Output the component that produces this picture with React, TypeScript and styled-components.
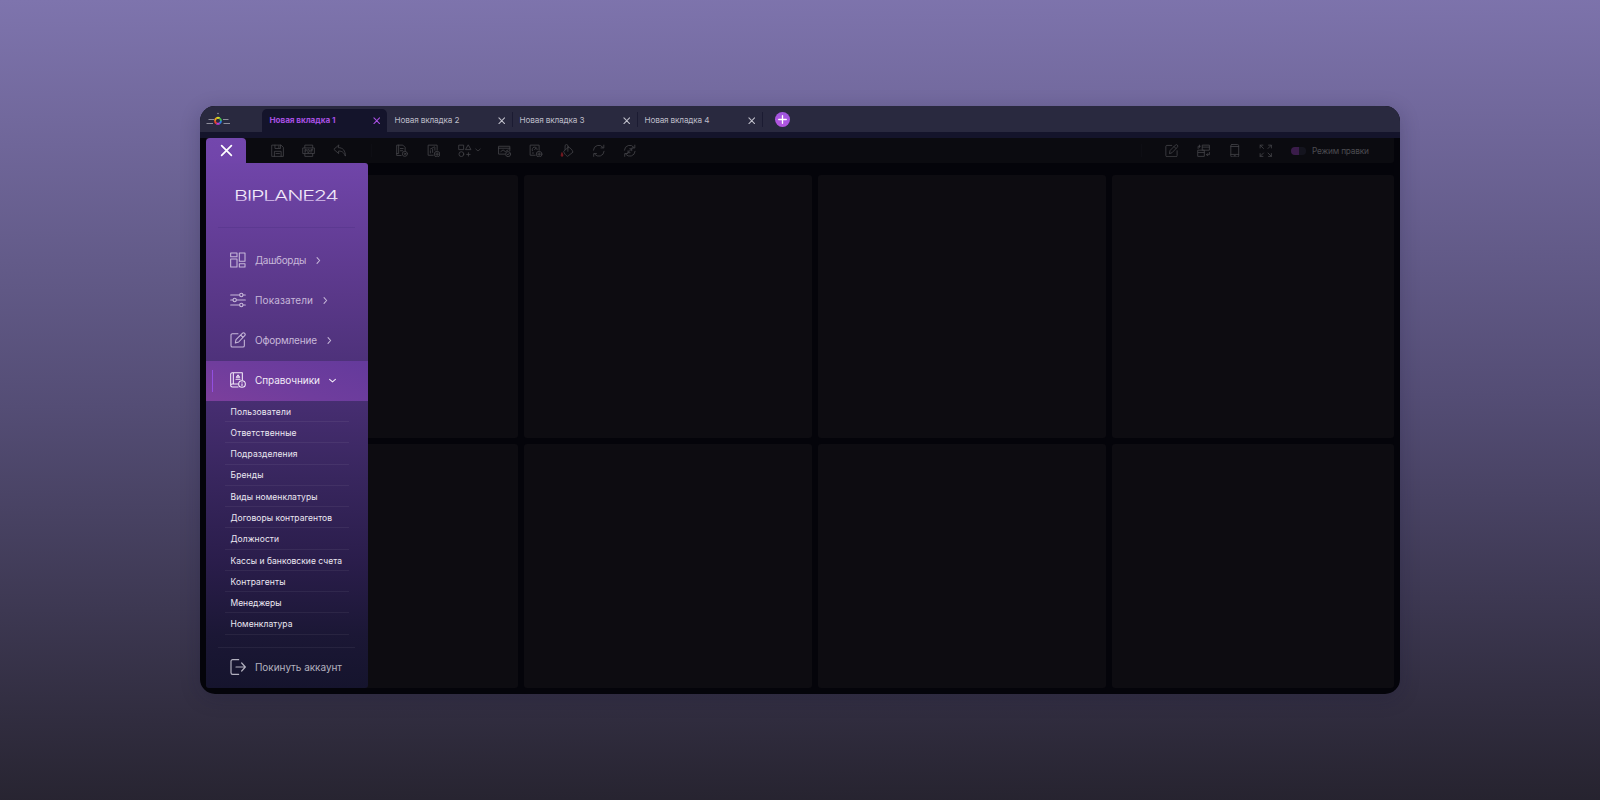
import React, { ReactNode, useLayoutEffect, useRef, useState } from "react";
import styled, { createGlobalStyle, css } from "styled-components";

const GlobalStyle = createGlobalStyle`
  * { box-sizing: border-box; }
  html, body { margin: 0; padding: 0; }
  body { font-family: Inter, Roboto, sans-serif; overflow: hidden; }
  button { font: inherit; color: inherit; background: none; border: 0; padding: 0; }
`;

const Page = styled.main`
  height: 800px;
  display: flex;
  align-items: center;
  justify-content: center;
  background: linear-gradient(179.500deg, #7e74ad 0%, #544d75 50%, #26232f 100%);
`;

const Window = styled.section`
  position: relative;
  width: 1200px;
  height: 588px;
  display: flex;
  flex-direction: column;
  border-radius: 15px;
  overflow: hidden;
  background: #04040a;
`;

const WindowShadow = styled.div`
  border-radius: 15px;
  box-shadow: 0 4px 20px rgba(20, 16, 50, 0.22);
`;

/* ---------- text ---------- */

const LabelText = styled.span<{ $size: number; $weight?: number }>`
  display: inline-block;
  white-space: nowrap;
  font-size: ${(p) => p.$size}px;
  font-weight: ${(p) => p.$weight ?? 400};
  line-height: 1.2;
`;

type LabelProps = { text: string; width: number; size: number; weight?: number };

/* Tracks the text so that it fills the given width. */
function Label({ text, width, size, weight }: LabelProps) {
  const ref = useRef<HTMLSpanElement>(null);
  const [tracking, setTracking] = useState(0);
  useLayoutEffect(() => {
    const el = ref.current;
    if (!el) return;
    const natural = el.getBoundingClientRect().width - tracking * text.length;
    setTracking((width - natural) / (text.length - 1));
  }, [text, width]);
  return (
    <LabelText ref={ref} $size={size} $weight={weight} style={{ letterSpacing: `${tracking}px` }}>
      {text}
    </LabelText>
  );
}

/* ---------- icons ---------- */

const Glyph = styled.svg<{ $size: number }>`
  display: block;
  flex: none;
  width: ${(p) => p.$size}px;
  height: ${(p) => p.$size}px;
  fill: none;
  stroke: currentColor;
  stroke-linecap: round;
  stroke-linejoin: round;
`;

function Icon({ size = 13.5, weight = 1.5, children }: { size?: number; weight?: number; children: ReactNode }) {
  return (
    <Glyph $size={size} viewBox="0 0 24 24" strokeWidth={weight}>
      {children}
    </Glyph>
  );
}

const crossPath = <path d="M3 3 21 21M21 3 3 21" />;
const plusBadge = (
  <>
    <circle cx="18" cy="18" r="5" />
    <path d="M18 15.5v5M15.5 18h5" />
  </>
);

const saveIcon = <path d="M2 2h16l4 4v16H2zM7 2v6h10V2M14 3.500v3M6 22v-9h12v9M9 17h6" />;
const pdfIcon = (
  <>
    <path d="M5 7V2h14v5M5 17v5h14v-5M2 7h20v10H2z" />
    <path d="M5.500 15V9.500h2v3h-2M10.500 15V9.500h1.500l1 1v3l-1 1.500zM16 15V9.500h3M16 12h2.500" />
  </>
);
const undoIcon = <path d="M10 2 1.500 9.500 10 17v-4.500c6 0 9 2 12 9C22 12 18 6.500 10 6.500z" />;
const docIcon = (
  <>
    <path d="M11 20.500H3V2h11l4 4v6M6.500 2v15H3M9.500 8h5M9.500 12h4" />
    <circle cx="17.500" cy="17.500" r="4.500" />
    <circle cx="17.500" cy="17.500" r="1.200" />
  </>
);
const chartIcon = (
  <>
    <path d="M11 20H2V2h16v9M6 16v-4M10 15V9M14 11V6M6 9l7-4" />
    {plusBadge}
  </>
);
const shapesIcon = (
  <>
    <path d="M2 2h8v8H2zM18.500 2 23 10h-9zM18.500 15.500v6M15.500 18.500h6" />
    <circle cx="6" cy="18" r="4.300" />
  </>
);
const tableIcon = (
  <>
    <path d="M12 18H1V4h20v8M1 7.500h20M5 13.500l4-3 4 3 5-3" />
    <circle cx="18" cy="18" r="4.500" />
    <path d="m16 18 1.500 1.500L20 16.500" />
  </>
);
const gaugeIcon = (
  <>
    <path d="M11 20H2V2h16v9M6 12a4.500 4.500 0 1 1 8.500-2M10 10l2.500-3M6 16h2" />
    {plusBadge}
  </>
);
const bucketIcon = (
  <>
    <path d="M15 5.500 6.500 13c1 4 3.500 7 7 9L23 14.500c-1-4-4-7.500-8-9zM14 13V3.500a2.500 2.500 0 0 0-5 0V10" />
    <path d="M3.500 16C1 20 2 22 3.500 22s3-2 0-6z" stroke="#7a1c24" fill="#7a1c24" />
  </>
);
const refreshPath = (
  <path d="M2.500 11A9.500 9.500 0 0 1 19.500 6M21 2v5h-5M21.500 13A9.500 9.500 0 0 1 4.500 18M3 22v-5h5" />
);
const autoRefreshIcon = (
  <>
    {refreshPath}
    <path d="M7 17 17 7M12 8.500h3.500V12M9 12v3.500h3.500" />
  </>
);
const editIcon = (
  <path d="M12 2.500H3.500a2 2 0 0 0-2 2v16a2 2 0 0 0 2 2h16a2 2 0 0 0 2-2V12M8 16.500l1-5L18.500 2a2 2 0 0 1 3.500 3.500L13 15zM16 4.500 19.500 8" />
);
const transferIcon = (
  <path d="M10 2h12v9H10zM10 5.500h12M2 11h11v11H2zM2 15h11M2 8V4h4M4.500 2v4M22 15v4h-5M19 17l-2 2 2 2" />
);
const phoneIcon = (
  <>
    <rect x="5" y="1" width="14" height="22" rx="2" />
    <path d="M5 4.500h14M5 18.500h14M11 20.800h2" />
  </>
);
const expandIcon = (
  <path d="M2 7V2h5M2 2l6 6M17 2h5v5M22 2l-6 6M2 17v5h5M2 22l6-6M17 22h5v-5M22 22l-6-6" />
);
const dashboardIcon = (
  <path d="M1 1.500h9.500v5.500H1zM14 1.500h8.500V14H14zM1 10.500h9.500v12H1zM14 17.500h8.500v5H14z" />
);
const slidersIcon = (
  <>
    <path d="M1 4.500h13.500M19.500 4.500H23M1 12h3.500M9.500 12H23M1 19.500h13.500M19.500 19.500H23" />
    <circle cx="17" cy="4.500" r="2.500" />
    <circle cx="7" cy="12" r="2.500" />
    <circle cx="17" cy="19.500" r="2.500" />
  </>
);
const bookIcon = (
  <>
    <path d="M12 22.500H3.500A2.500 2.500 0 0 1 1 20V3.500A2.500 2.500 0 0 1 3.500 1H18.500v11M5 1v17M12 18H3.500A2.200 2.200 0 0 0 1 20.200" />
    <path d="M9.500 8 12 4.500 14.500 8zM9 11h6" />
    <circle cx="18" cy="18" r="5" />
    <path d="M18 17.500v3M18 15.300v.2" />
  </>
);
const leaveIcon = (
  <path d="M13 1H4a2.500 2.500 0 0 0-2.500 2.500v17A2.500 2.500 0 0 0 4 23h9M9 12h14M17.500 6l5.500 6-5.500 6" />
);

/* ---------- tab strip ---------- */

const TabStrip = styled.header`
  display: flex;
  align-items: flex-end;
  flex: none;
  height: 25.500px;
  background: #29293f;
`;

const Brand = styled.div`
  width: 62px;
  height: 25px;
  padding: 4px 0 0 6px;
`;

const TabItem = styled.div<{ $active?: boolean }>`
  display: flex;
  align-items: center;
  justify-content: space-between;
  width: 125px;
  height: 23px;
  padding: 2px 7px 0 7.500px;
  color: #bdbdc8;
  ${(p) =>
    p.$active &&
    css`
      color: #a64fe0;
      background: #14142b;
      border-radius: 5px 5px 0 0;
    `}
`;

const TabClose = styled.span`
  margin-top: -1.500px;
`;

const TabDivider = styled.i`
  align-self: center;
  width: 1px;
  height: 15px;
  margin: 2px -1px 0 0;
  background: #1b1b32;
`;

const AddTab = styled.button`
  align-self: center;
  display: grid;
  place-items: center;
  width: 15px;
  height: 15px;
  margin: 2px 0 0 13px;
  border-radius: 50%;
  color: #fff;
  background: linear-gradient(200deg, #9a55dd, #b855e0);
`;

const Band = styled.div`
  flex: none;
  height: 6.500px;
  background: #14142b;
`;

/* ---------- toolbar ---------- */

const Toolbar = styled.nav`
  display: flex;
  align-items: center;
  flex: none;
  height: 25px;
  margin: 0 6px;
  padding-left: 55.800px;
  border-radius: 0 0 3px 3px;
  background: #0b0b10;
  color: #434347;
`;

const Tool = styled.button<{ $wide?: boolean }>`
  display: flex;
  align-items: center;
  justify-content: ${(p) => (p.$wide ? "flex-start" : "center")};
  gap: 3px;
  width: ${(p) => (p.$wide ? 40 : 31.25)}px;
  height: 25px;
  padding: 0 0 0.500px ${(p) => (p.$wide ? 9 : 0)}px;
`;

const ToolDivider = styled.i`
  width: 1px;
  height: 13px;
  margin: 0 15px;
  background: #0e0e14;
`;

const Spacer = styled.div`
  flex: 1;
`;

const EditMode = styled.div`
  display: flex;
  align-items: center;
  gap: 6.500px;
  width: 112.500px;
  padding: 2px 0 0 9px;
  color: #4b4b50;
`;

const Toggle = styled.span`
  display: block;
  width: 15px;
  height: 8px;
  margin-top: -1.500px;
  border-radius: 4px;
  background: linear-gradient(90deg, #3a1c4a 0 52%, #14141e 52%);
`;

/* ---------- board ---------- */

const Board = styled.div`
  flex: 1;
  display: grid;
  grid-template-columns: 312px 288px 288px 1fr;
  grid-template-rows: 263px 243.500px;
  gap: 6px;
  padding: 12.300px 6px 6px;
`;

const Cell = styled.div`
  border-radius: 3px;
  background: #0d0c11;
`;

/* ---------- menu ---------- */

const Menu = styled.aside`
  position: absolute;
  left: 6px;
  top: 32px;
  width: 162px;
  height: 549.500px;
  display: flex;
  flex-direction: column;
`;

const MenuClose = styled.button`
  display: grid;
  place-items: center;
  flex: none;
  width: 40px;
  height: 25px;
  border-radius: 4px 4px 0 0;
  color: #fff;
  background: linear-gradient(#7347ad, #7145aa);
`;

const MenuBody = styled.div`
  flex: 1;
  display: flex;
  flex-direction: column;
  border-radius: 0 3px 3px 3px;
  background: linear-gradient(
    180deg,
    #7045a9 0%,
    #5a3889 25%,
    #472e72 45%,
    #38265e 60%,
    #2a1d4b 76%,
    #1b1735 90%,
    #15142d 100%
  );
`;

const Wordmark = styled.svg`
  display: block;
  flex: none;
  width: 110px;
  height: 20px;
  margin: 22px 0 0 26px;
`;

const Rule = styled.hr`
  flex: none;
  width: 137px;
  height: 1px;
  margin: 0 0 0 12px;
  border: 0;
  background: rgba(255, 255, 255, 0.06);
`;

const TopRule = styled(Rule)`
  margin-top: 21.500px;
  margin-bottom: 13px;
  background: rgba(40, 20, 90, 0.13);
`;

const MenuItem = styled.button<{ $active?: boolean }>`
  position: relative;
  display: flex;
  align-items: center;
  flex: none;
  gap: 8.800px;
  height: 40.070px;
  padding: 0 0 1px 24.200px;
  color: ${(p) => (p.$active ? "#f3ecf8" : "#c7b8d9")};
  ${(p) =>
    p.$active &&
    css`
      background: linear-gradient(20deg, #7c3f9c 0%, #6f3d9d 45%, #643a9c 100%);
    `}
`;

const ActiveMark = styled.i`
  position: absolute;
  left: 6px;
  top: 9px;
  width: 1px;
  height: 22px;
  background: #9350e0;
`;

const Chevron = styled.span`
  display: block;
  margin: 1px 0 0 0.500px;
`;

const SubList = styled.ul`
  list-style: none;
  margin: 0 0 12.300px 18.500px;
  padding: 0;
  width: 124px;
`;

const SubItem = styled.li`
  display: flex;
  align-items: center;
  height: 21.280px;
  padding: 1.800px 0 0 6px;
  border-bottom: 1px solid rgba(255, 255, 255, 0.06);
  color: #ece8f2;
`;

const LeaveItem = styled(MenuItem)`
  height: 39.500px;
  color: #b3b1bf;
`;

const tabs: [string, number][] = [
  ["Новая вкладка 1", 66],
  ["Новая вкладка 2", 65],
  ["Новая вкладка 3", 65],
  ["Новая вкладка 4", 65],
];

const sections: { name: string; width: number; icon: ReactNode }[] = [
  { name: "Дашборды", width: 51.5, icon: dashboardIcon },
  { name: "Показатели", width: 58, icon: slidersIcon },
  { name: "Оформление", width: 62, icon: editIcon },
  { name: "Справочники", width: 65, icon: bookIcon },
];

const references: [string, number][] = [
  ["Пользователи", 60.5],
  ["Ответственные", 66],
  ["Подразделения", 67],
  ["Бренды", 33],
  ["Виды номенклатуры", 87],
  ["Договоры контрагентов", 101.5],
  ["Должности", 48.5],
  ["Кассы и банковские счета", 111.5],
  ["Контрагенты", 55],
  ["Менеджеры", 51],
  ["Номенклатура", 62],
];

const historyTools = [saveIcon, pdfIcon, undoIcon];
const insertTools = [docIcon, chartIcon];
const dataTools = [tableIcon, gaugeIcon, bucketIcon, refreshPath, autoRefreshIcon];
const viewTools = [editIcon, transferIcon, phoneIcon, expandIcon];

function Tools({ icons }: { icons: ReactNode[] }) {
  return (
    <>
      {icons.map((icon, i) => (
        <Tool key={i}>
          <Icon>{icon}</Icon>
        </Tool>
      ))}
    </>
  );
}

function BrandMark() {
  const arcs = ["#3fbf4a", "#2f7fe0", "#c23bd0", "#e8432e", "#f2a01f", "#d9dd2a"];
  return (
    <svg width="25" height="17" viewBox="0 0 25 17" fill="none">
      <path d="M2.500 8.500H8M.5 12.500H7M17 8.500h5.500M17.500 12.500H24" stroke="#8f8f9c" strokeWidth="1" />
      <circle cx="12" cy="2.500" r=".8" fill="#8f8f9c" />
      {arcs.map((c, i) => (
        <circle
          key={c}
          cx="12"
          cy="9.800"
          r="3"
          stroke={c}
          strokeWidth="1.900"
          strokeDasharray="3.142 15.708"
          transform={`rotate(${i * 60 - 60} 12 9.800)`}
        />
      ))}
    </svg>
  );
}

export default function App() {
  return (
    <Page>
      <GlobalStyle />
      <WindowShadow>
        <Window>
          <TabStrip>
            <Brand>
              <BrandMark />
            </Brand>
            {tabs.map(([name, width], i) => (
              <React.Fragment key={name}>
                <TabItem $active={i === 0}>
                  <Label text={name} width={width} size={8.2} weight={i === 0 ? 700 : 400} />
                  <TabClose>
                    <Icon size={7.5} weight={3.6}>
                      {crossPath}
                    </Icon>
                  </TabClose>
                </TabItem>
                {i > 0 && <TabDivider />}
              </React.Fragment>
            ))}
            <AddTab>
              <Icon size={9} weight={3.6}>
                <path d="M12 2v20M2 12h20" />
              </Icon>
            </AddTab>
          </TabStrip>
          <Band />
          <Toolbar>
            <Tools icons={historyTools} />
            <ToolDivider />
            <Tools icons={insertTools} />
            <Tool $wide>
              <Icon>{shapesIcon}</Icon>
              <Icon size={6} weight={3}>
                <path d="m3 8 9 8 9-8" />
              </Icon>
            </Tool>
            <Tools icons={dataTools} />
            <Spacer />
            <ToolDivider />
            <Tools icons={viewTools} />
            <EditMode>
              <Toggle />
              <Label text="Режим правки" width={57} size={8.3} />
            </EditMode>
          </Toolbar>
          <Board>
            {Array.from({ length: 8 }, (_, i) => (
              <Cell key={i} />
            ))}
          </Board>
          <Menu>
            <MenuClose>
              <Icon size={13} weight={3.2}>
                {crossPath}
              </Icon>
            </MenuClose>
            <MenuBody>
              <Wordmark viewBox="0 0 110 20">
                <defs>
                  <linearGradient id="wordmark" x1="0" y1="0" x2="0" y2="1">
                    <stop offset="0.65" stopColor="#f1eaf8" />
                    <stop offset="0.78" stopColor="#c3a9df" />
                  </linearGradient>
                </defs>
                <text
                  x="2"
                  y="15.500"
                  fill="url(#wordmark)"
                  fontFamily="Inter, sans-serif"
                  fontWeight="300"
                  fontSize="15"
                  letterSpacing="-0.9"
                  textLength="103.500"
                  lengthAdjust="spacingAndGlyphs"
                >
                  BIPLANE24
                </text>
              </Wordmark>
              <TopRule />
              {sections.map(({ name, width, icon }, i) => {
                const active = i === 3;
                return (
                  <MenuItem key={name} $active={active}>
                    {active && <ActiveMark />}
                    <Icon size={16} weight={1.6}>
                      {icon}
                    </Icon>
                    <Label text={name} width={width} size={10} />
                    <Chevron>
                      <Icon size={7} weight={3.6}>
                        <path d={active ? "m2 8 10 9 10-9" : "m7 2 9 10-9 10"} />
                      </Icon>
                    </Chevron>
                  </MenuItem>
                );
              })}
              <SubList>
                {references.map(([name, width]) => (
                  <SubItem key={name}>
                    <Label text={name} width={width} size={8.5} />
                  </SubItem>
                ))}
              </SubList>
              <Rule />
              <LeaveItem>
                <Icon size={16} weight={1.8}>
                  {leaveIcon}
                </Icon>
                <Label text="Покинуть аккаунт" width={87} size={10} />
              </LeaveItem>
            </MenuBody>
          </Menu>
        </Window>
      </WindowShadow>
    </Page>
  );
}
